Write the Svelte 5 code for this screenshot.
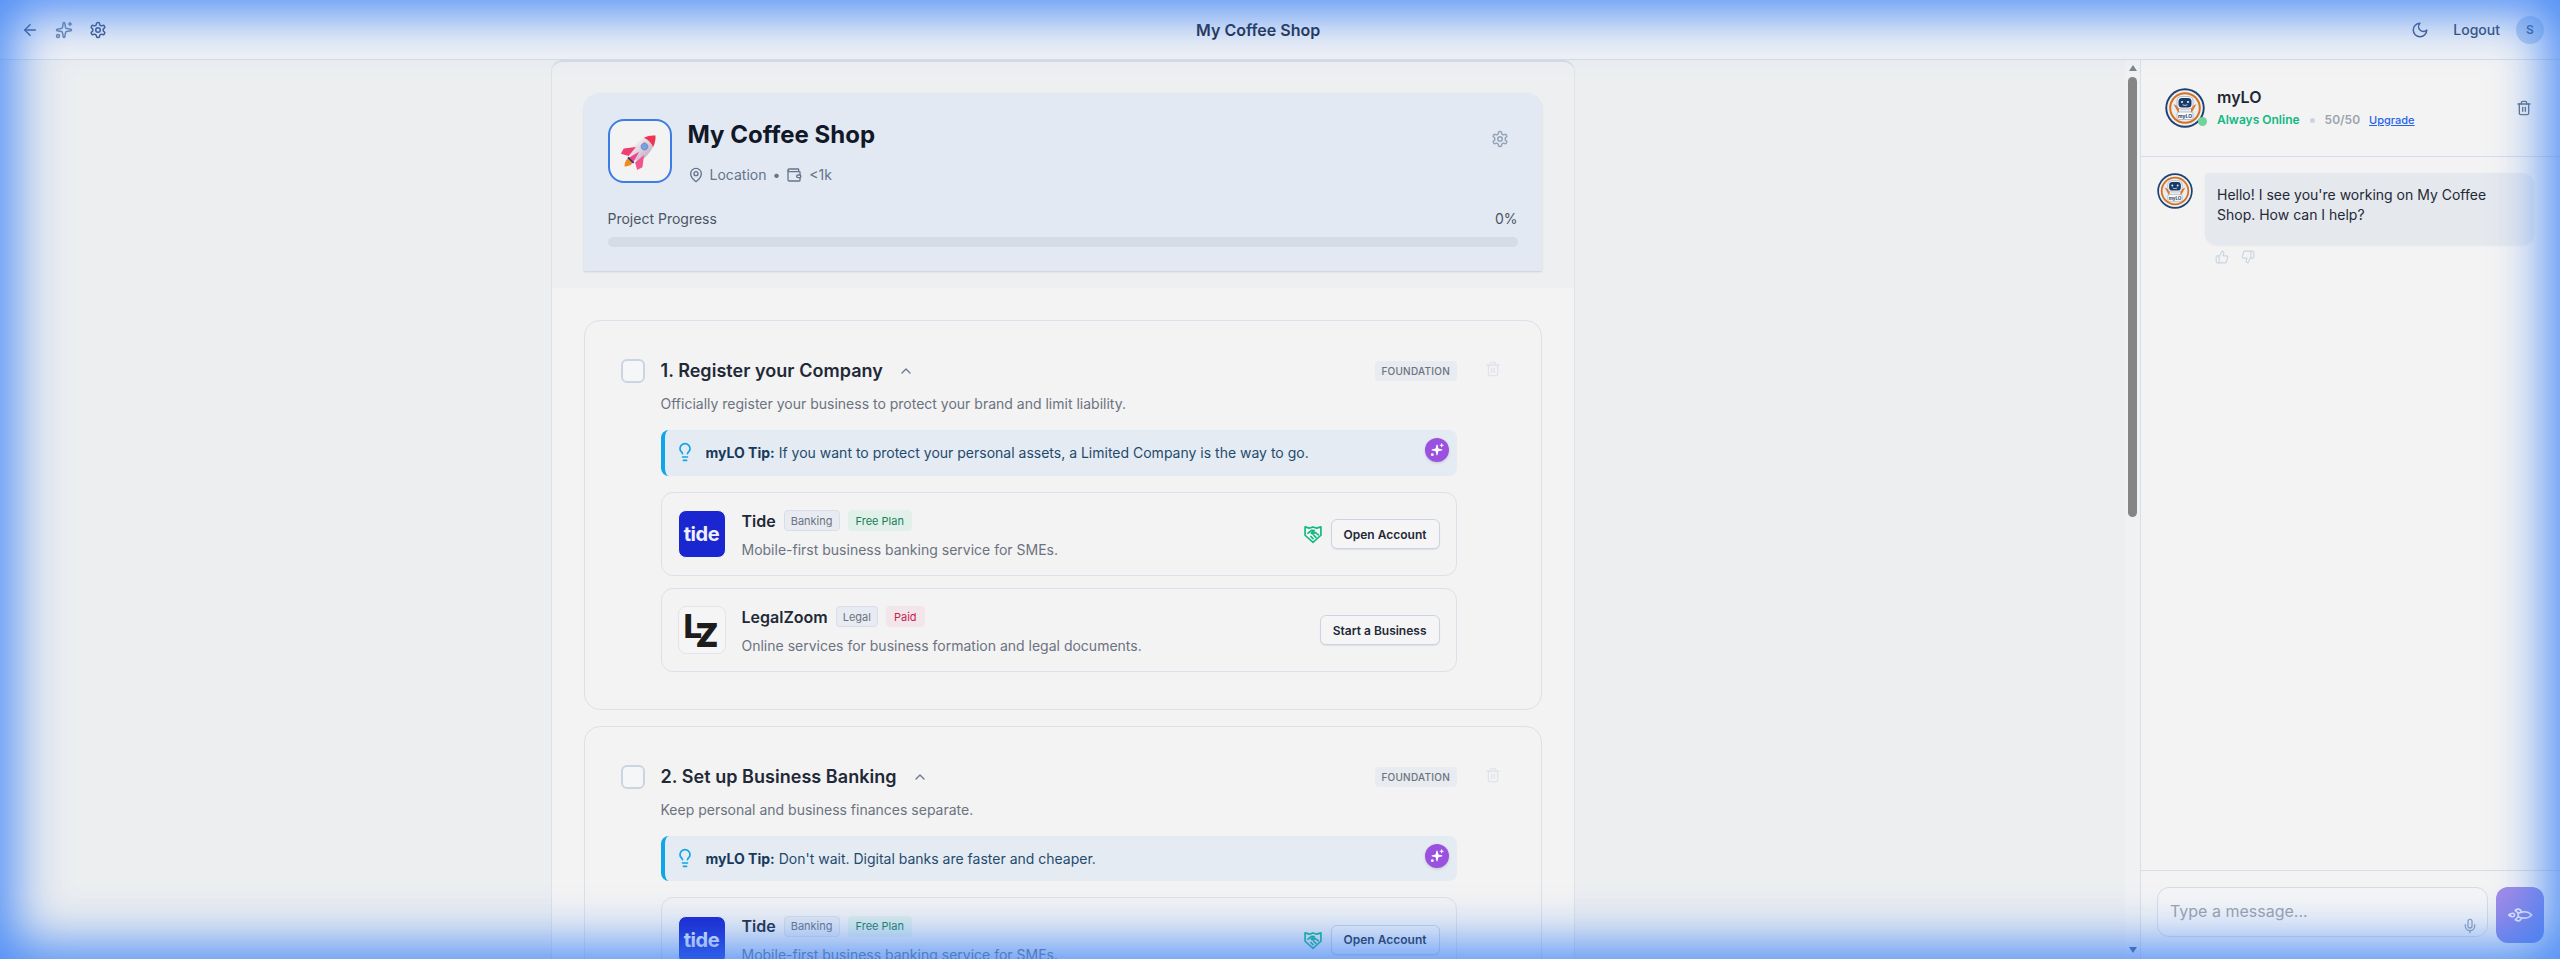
<script>
	const icons = {
		back: ['M12 19l-7-7 7-7', 'M19 12H5'],
		sparkles: [
			'M11.017 2.814a1 1 0 0 1 1.966 0l1.051 5.558a2 2 0 0 0 1.594 1.594l5.558 1.051a1 1 0 0 1 0 1.966l-5.558 1.051a2 2 0 0 0-1.594 1.594l-1.051 5.558a1 1 0 0 1-1.966 0l-1.051-5.558a2 2 0 0 0-1.594-1.594l-5.558-1.051a1 1 0 0 1 0-1.966l5.558-1.051a2 2 0 0 0 1.594-1.594z',
			'M20 2v4',
			'M22 4h-4',
			'M6 20a2 2 0 1 1-4 0 2 2 0 0 1 4 0'
		],
		gear: [
			'M12.22 2h-.44a2 2 0 0 0-2 2v.18a2 2 0 0 1-1 1.73l-.43.25a2 2 0 0 1-2 0l-.15-.08a2 2 0 0 0-2.73.73l-.22.38a2 2 0 0 0 .73 2.73l.15.1a2 2 0 0 1 1 1.72v.51a2 2 0 0 1-1 1.74l-.15.09a2 2 0 0 0-.73 2.73l.22.38a2 2 0 0 0 2.73.73l.15-.08a2 2 0 0 1 2 0l.43.25a2 2 0 0 1 1 1.73V20a2 2 0 0 0 2 2h.44a2 2 0 0 0 2-2v-.18a2 2 0 0 1 1-1.73l.43-.25a2 2 0 0 1 2 0l.15.08a2 2 0 0 0 2.73-.73l.22-.39a2 2 0 0 0-.73-2.73l-.15-.08a2 2 0 0 1-1-1.74v-.5a2 2 0 0 1 1-1.74l.15-.09a2 2 0 0 0 .73-2.73l-.22-.38a2 2 0 0 0-2.73-.73l-.15.08a2 2 0 0 1-2 0l-.43-.25a2 2 0 0 1-1-1.73V4a2 2 0 0 0-2-2z',
			'M15 12a3 3 0 1 1-6 0 3 3 0 0 1 6 0'
		],
		moon: ['M12 3a6 6 0 0 0 9 9 9 9 0 1 1-9-9Z'],
		pin: ['M20 10c0 6-8 12-8 12s-8-6-8-12a8 8 0 0 1 16 0Z', 'M15 10a3 3 0 1 1-6 0 3 3 0 0 1 6 0'],
		wallet: [
			'M19 7V4a1 1 0 0 0-1-1H5a2 2 0 0 0 0 4h15a1 1 0 0 1 1 1v4h-3a2 2 0 0 0 0 4h3a1 1 0 0 0 1-1v-2a1 1 0 0 0-1-1',
			'M3 5v14a2 2 0 0 0 2 2h15a1 1 0 0 0 1-1v-4'
		],
		chevron: ['m18 15-6-6-6 6'],
		bulb: [
			'M15 14c.2-1 .7-1.7 1.5-2.5 1-.9 1.500-2.200 1.500-3.500A6 6 0 0 0 6 8c0 1 .2 2.200 1.500 3.500.7.7 1.300 1.500 1.500 2.500',
			'M9 18h6',
			'M10 22h4'
		],
		trash: [
			'M3 6h18',
			'M19 6v14c0 1-1 2-2 2H7c-1 0-2-1-2-2V6',
			'M8 6V4c0-1 1-2 2-2h4c1 0 2 1 2 2v2',
			'M10 11v6',
			'M14 11v6'
		],
		up: [
			'M7 10v12',
			'M15 5.88 14 10h5.83a2 2 0 0 1 1.92 2.56l-2.33 8A2 2 0 0 1 17.5 22H4a2 2 0 0 1-2-2v-8a2 2 0 0 1 2-2h2.76a2 2 0 0 0 1.79-1.11L12 2a3.13 3.13 0 0 1 3 3.88Z'
		],
		down: [
			'M17 14V2',
			'M9 18.12 10 14H4.17a2 2 0 0 1-1.92-2.56l2.33-8A2 2 0 0 1 6.5 2H20a2 2 0 0 1 2 2v8a2 2 0 0 1-2 2h-2.76a2 2 0 0 0-1.79 1.11L12 22a3.13 3.13 0 0 1-3-3.88Z'
		],
		mic: [
			'M12 2a3 3 0 0 0-3 3v7a3 3 0 0 0 6 0V5a3 3 0 0 0-3-3Z',
			'M19 10v2a7 7 0 0 1-14 0v-2',
			'M12 19v3'
		],
		rocket: [
			'M4.5 16.5c-1.5 1.26-2 5-2 5s3.74-.5 5-2c.71-.84.7-2.13-.09-2.91a2.18 2.18 0 0 0-2.91-.09z',
			'm12 15-3-3a22 22 0 0 1 2-3.95A12.88 12.88 0 0 1 22 2c0 2.72-.78 7.5-6 11a22.35 22.35 0 0 1-4 2z',
			'M9 12H4s.55-3.03 2-4c1.62-1.08 5 0 5 0',
			'M12 15v5s3.03-.55 4-2c1.08-1.62 0-5 0-5'
		],
		partner: [
			'M2.500 3.500l5 1.500 4.500-1.500 4.500 1.500 5-1.500v10L12 22 2.500 13.500z',
			'M6 11l4.500-3.500 3 .5-3.500 3 2 1 2.500-2 4 3',
			'M9.500 15l2.500 2.500',
			'M13 13.500l2.500 2.500'
		]
	};

	const tide = {
		name: 'Tide',
		logo: 'tide',
		category: 'Banking',
		plan: 'Free Plan',
		planKind: 'free',
		desc: 'Mobile-first business banking service for SMEs.',
		action: 'Open Account',
		partner: true
	};
	const legalZoom = {
		name: 'LegalZoom',
		logo: 'lz',
		category: 'Legal',
		plan: 'Paid',
		planKind: 'paid',
		desc: 'Online services for business formation and legal documents.',
		action: 'Start a Business',
		partner: false
	};

	const steps = [
		{
			title: '1. Register your Company',
			desc: 'Officially register your business to protect your brand and limit liability.',
			tip: 'If you want to protect your personal assets, a Limited Company is the way to go.',
			providers: [tide, legalZoom]
		},
		{
			title: '2. Set up Business Banking',
			desc: 'Keep personal and business finances separate.',
			tip: "Don't wait. Digital banks are faster and cheaper.",
			providers: [tide]
		}
	];
</script>

{#snippet icon(name, size, cls = '')}
	<svg
		class={cls}
		width={size}
		height={size}
		viewBox="0 0 24 24"
		fill="none"
		stroke="currentColor"
		stroke-width="2"
		stroke-linecap="round"
		stroke-linejoin="round"
		aria-hidden="true"
	>
		{#each icons[name] as d}
			<path {d} />
		{/each}
	</svg>
{/snippet}

{#snippet robot(size)}
	<svg width={size} height={size} viewBox="0 0 40 40" aria-hidden="true">
		<circle cx="20" cy="20" r="19.700" fill="#1e4272" />
		<circle cx="20" cy="20" r="17.800" fill="#eef0f3" />
		<circle cx="20" cy="20" r="15.800" fill="#d6701f" />
		<circle cx="20" cy="20" r="13.800" fill="#e9ecf0" />
		<path d="M8.500 16l5.500 3v7zM31.500 16l-5.500 3v7z" fill="#e2731f" />
		<rect x="12" y="8.500" width="16" height="12.500" rx="4" fill="#f5f6f8" stroke="#8f9cae" stroke-width=".6" />
		<rect x="13.500" y="10" width="13" height="9.500" rx="3.500" fill="#183a68" />
		<circle cx="17" cy="14" r="1.100" fill="#e8eef6" />
		<circle cx="23" cy="14" r="1.100" fill="#e8eef6" />
		<path d="M17.500 16.800q2.500 1.200 5 0" stroke="#e8eef6" stroke-width=".8" fill="none" />
		<rect x="12" y="24" width="16" height="7.500" rx="2" fill="#fafbfc" stroke="#8f9cae" stroke-width=".6" />
		<text x="20" y="29.600" text-anchor="middle" font-size="5" font-weight="700" font-family="Inter, sans-serif" fill="#33415c">myLO</text>
	</svg>
{/snippet}

<div class="app">
	<header class="topbar">
		<div class="top-left">
			{@render icon('back', 18)}
			{@render icon('sparkles', 18, 'ico-spark')}
			{@render icon('gear', 18)}
		</div>
		<h1 class="top-title">My Coffee Shop</h1>
		<div class="top-right">
			{@render icon('moon', 18)}
			<span class="logout">Logout</span>
			<span class="user">S</span>
		</div>
	</header>

	<div class="body">
		<main class="scroller">
			<div class="column">
				<section class="hero-wrap">
					<div class="hero">
						<div class="hero-top">
							<div class="hero-icon">
								<svg width="46" height="46" viewBox="0 0 40 40" aria-hidden="true">
									<defs>
										<linearGradient id="rocket-body" x1="0" y1="0" x2="1" y2="0">
											<stop offset="0" stop-color="#f2e9ee" />
											<stop offset="1" stop-color="#c7b6cd" />
										</linearGradient>
									</defs>
									<g transform="rotate(45 20 20)">
										<path d="M17.500 31c-1.500 3 1 6.500 2.500 8 1.500-1.500 4-5 2.500-8z" fill="#f08a24" />
										<path d="M20 1c6.500 5.500 8.500 17 6 27H14c-2.500-10-.5-21.500 6-27z" fill="url(#rocket-body)" />
										<path d="M20 1c2.600 2.200 4.500 5.200 5.700 8.500-3.600-1.500-7.800-1.500-11.400 0C15.500 6.200 17.400 3.200 20 1z" fill="#ef3550" />
										<circle cx="20" cy="14.500" r="3.200" fill="#8f8aa6" />
										<circle cx="20" cy="14.500" r="2.300" fill="#63a9f5" />
										<path d="M15 20l-6.500 8.500 1.500 5 6-3.500z" fill="#ee3f6e" />
										<path d="M25 20l6.500 8.500-1.500 5-6-3.500z" fill="#f4548e" />
										<path d="M20 21l-3 10.500h6z" fill="#f0448a" />
										<path d="M16.500 30.500h7v1.500h-7z" fill="#2b3a75" />
									</g>
								</svg>
							</div>
							<div class="hero-text">
								<h2 class="hero-title">My Coffee Shop</h2>
								<div class="hero-meta">
									{@render icon('pin', 16)}
									<span class="loc">Location</span>
									<span class="bullet">•</span>
									{@render icon('wallet', 16)}
									<span class="budget">&lt;1k</span>
								</div>
							</div>
							{@render icon('gear', 18, 'hero-gear')}
						</div>
						<div class="progress-head">
							<span>Project Progress</span>
							<span>0%</span>
						</div>
						<div class="progress-track"></div>
					</div>
				</section>

				<div class="steps">
					{#each steps as step}
						<article class="step">
							<span class="checkbox"></span>
							<div class="step-main">
								<div class="step-head">
									<h3 class="step-title">{step.title}</h3>
									{@render icon('chevron', 16, 'step-chevron')}
									<span class="phase">FOUNDATION</span>
								</div>
								<p class="step-desc">{step.desc}</p>
								<div class="tip">
									{@render icon('bulb', 20, 'tip-bulb')}
									<p class="tip-text"><b>myLO Tip:</b> {step.tip}</p>
									<span class="tip-btn">
										<svg width="14" height="14" viewBox="0 0 24 24" fill="#fff" aria-hidden="true">
											<path d="M11 3.500c.3-1.300 1.700-1.300 2 0l1 4.700c.2.800.8 1.400 1.600 1.600l4.700 1c1.300.3 1.300 1.700 0 2l-4.700 1c-.8.200-1.400.8-1.600 1.600l-1 4.700c-.3 1.300-1.700 1.300-2 0l-1-4.700c-.2-.8-.8-1.400-1.600-1.600l-4.700-1c-1.300-.3-1.300-1.700 0-2l4.700-1c.8-.2 1.400-.8 1.600-1.600z" />
											<circle cx="4" cy="20" r="2.400" />
											<path d="M20 1.500v5M17.500 4h5" stroke="#fff" stroke-width="1.800" stroke-linecap="round" />
										</svg>
									</span>
								</div>
								<div class="providers">
									{#each step.providers as p}
										<div class="provider">
											{#if p.logo === 'tide'}
												<span class="logo logo-tide">tide</span>
											{:else}
												<span class="logo logo-lz">
													<svg width="46" height="46" viewBox="0 0 46 46" aria-hidden="true">
														<text x="4.500" y="30.700" font-size="33" font-weight="800" font-family="Inter, sans-serif" fill="#1c1c1c">L</text>
														<text x="16.500" y="39.700" font-size="33" font-weight="900" font-family="Inter, sans-serif" fill="#1c1c1c">Z</text>
													</svg>
												</span>
											{/if}
											<div class="provider-text">
												<div class="provider-head">
													<span class="provider-name">{p.name}</span>
													<span class="tag">{p.category}</span>
													<span class="plan {p.planKind}">{p.plan}</span>
												</div>
												<p class="provider-desc">{p.desc}</p>
											</div>
											{#if p.partner}
												{@render icon('partner', 20, 'partner')}
											{/if}
											<button class="action">{p.action}</button>
										</div>
									{/each}
								</div>
							</div>
							{@render icon('trash', 16, 'step-trash')}
						</article>
					{/each}
				</div>
			</div>
		</main>

		<div class="scrollbar" aria-hidden="true">
			<span class="arrow arrow-up"></span>
			<span class="thumb"></span>
			<span class="arrow arrow-down"></span>
		</div>

		<aside class="chat">
			<div class="chat-head">
				<div class="chat-avatar">
					{@render robot(40)}
					<span class="online"></span>
				</div>
				<div class="chat-id">
					<div class="chat-name">myLO</div>
					<div class="chat-status">
						<span class="always">Always Online</span>
						<span class="sep"></span>
						<span class="quota">50/50</span>
						<span class="upgrade">Upgrade</span>
					</div>
				</div>
				{@render icon('trash', 16, 'chat-trash')}
			</div>

			<div class="messages">
				<div class="message">
					{@render robot(36)}
					<div class="message-col">
						<p class="bubble">Hello! I see you're working on My Coffee Shop. How can I help?</p>
						<div class="feedback">
							{@render icon('up', 14)}
							{@render icon('down', 14)}
						</div>
					</div>
				</div>
			</div>

			<div class="composer">
				<div class="input">
					<span class="placeholder">Type a message...</span>
					{@render icon('mic', 16, 'mic')}
				</div>
				<span class="send">{@render icon('rocket', 20, 'send-icon')}</span>
			</div>
		</aside>
	</div>

	<div class="glow" aria-hidden="true"></div>
</div>

<style>
	:global(body) {
		margin: 0;
		background: #eceef0;
		overflow: hidden;
	}
	.app {
		height: 959px;
		display: flex;
		flex-direction: column;
		font-family: Inter, 'Liberation Sans', sans-serif;
		color: #1f2937;
		overflow: hidden;
	}
	h1,
	h2,
	h3,
	p {
		margin: 0;
	}
	svg {
		display: block;
		flex: none;
	}

	/* top bar */
	.topbar {
		height: 60px;
		box-sizing: border-box;
		flex: none;
		display: flex;
		align-items: center;
		justify-content: space-between;
		padding: 0 16px 0 21px;
		background: #f2f3f5;
		border-bottom: 1px solid #d6dce6;
	}
	.top-left {
		display: flex;
		align-items: center;
		gap: 16px;
		color: #3f5680;
	}
	:global(.ico-spark) {
		color: #7286a8;
	}
	.top-title {
		font-size: 16px;
		font-weight: 600;
		color: #1e293b;
		margin-left: -2px;
	}
	.top-right {
		display: flex;
		align-items: center;
		color: #475e85;
	}
	.logout {
		margin-left: 24px;
		margin-right: 16px;
		font-size: 14px;
		font-weight: 500;
		color: #334a6b;
	}
	.user {
		width: 28px;
		height: 28px;
		border-radius: 50%;
		background: #bdd0ea;
		color: #3b5a8a;
		font-size: 12px;
		font-weight: 600;
		display: flex;
		align-items: center;
		justify-content: center;
	}

	.body {
		flex: 1;
		min-height: 0;
		display: flex;
	}

	/* center column */
	.scroller {
		flex: 1;
		min-width: 0;
		overflow: hidden;
		display: flex;
		justify-content: center;
		background: #eceef0;
	}
	.column {
		width: 1024px;
		box-sizing: border-box;
		flex: none;
		align-self: flex-start;
		background: #f3f3f3;
		border: 1px solid #dde1e9;
		border-top: 2px solid #d4dce7;
		border-bottom: 0;
		border-radius: 12px 12px 0 0;
		overflow: hidden;
	}
	.hero-wrap {
		padding: 31px 32px 17px;
		background: #eeeff1;
	}
	.hero {
		height: 178px;
		box-sizing: border-box;
		padding: 26px 24px 24px;
		background: #e2e9f3;
		border-radius: 16px 16px 0 0;
		box-shadow: 0 1px 2px rgba(100, 116, 139, 0.25);
	}
	.hero-top {
		display: flex;
		gap: 16px;
		height: 64px;
	}
	.hero-icon {
		width: 64px;
		height: 64px;
		box-sizing: border-box;
		border: 2px solid #3b7de8;
		border-radius: 16px;
		background: #f3f3f3;
		display: flex;
		align-items: center;
		justify-content: center;
		flex: none;
	}
	.hero-text {
		flex: 1;
		min-width: 0;
	}
	.hero-title {
		font-size: 24px;
		line-height: 32px;
		font-weight: 700;
		color: #111827;
	}
	.hero-meta {
		margin-top: 14px;
		display: flex;
		align-items: center;
		font-size: 14px;
		line-height: 20px;
		color: #64748b;
	}
	.loc {
		margin-left: 6px;
	}
	.bullet {
		margin: 0 6px;
		color: #64748b;
	}
	.budget {
		margin-left: 7px;
	}
	:global(.hero-gear) {
		color: #94a3b8;
		margin-top: 11px;
		margin-right: 9px;
	}
	.progress-head {
		margin-top: 26px;
		display: flex;
		justify-content: space-between;
		font-size: 14px;
		line-height: 20px;
		font-weight: 400;
		color: #4b5563;
	}
	.progress-track {
		margin-top: 8px;
		height: 10px;
		border-radius: 5px;
		background: #d5dce5;
	}

	/* steps */
	.steps {
		padding: 32px;
		display: flex;
		flex-direction: column;
		gap: 16px;
	}
	.step {
		display: grid;
		grid-template-columns: 24px minmax(0, 1fr) 24px;
		column-gap: 16px;
		padding: 36px 36px 37px;
		background: #f3f3f3;
		border: 1px solid #dde0ea;
		border-radius: 16px;
	}
	.checkbox {
		width: 24px;
		height: 24px;
		margin-top: 2px;
		box-sizing: border-box;
		border: 2px solid #cbd5e1;
		border-radius: 6px;
		background: #f5f6f7;
	}
	.step-main {
		margin-right: 8px;
	}
	.step-head {
		height: 28px;
		display: flex;
		align-items: center;
	}
	.step-title {
		font-size: 18px;
		line-height: 28px;
		font-weight: 600;
		color: #1f2937;
		letter-spacing: 0.04px;
	}
	:global(.step-chevron) {
		color: #6b7a90;
		margin-left: 15px;
	}
	.phase {
		margin-left: auto;
		height: 20px;
		padding: 0 6.5px;
		display: flex;
		align-items: center;
		border-radius: 4px;
		background: #e8ebef;
		color: #6b7280;
		font-size: 10px;
		letter-spacing: 0.25px;
		font-weight: 500;
	}
	:global(.step-trash) {
		color: #e0e4ea;
		margin: 4px 0 0 4px;
	}
	.step-desc {
		margin-top: 9px;
		font-size: 14px;
		line-height: 20px;
		color: #6b7280;
	}
	.tip {
		position: relative;
		margin-top: 16px;
		display: flex;
		align-items: center;
		gap: 11px;
		padding: 12.25px 12px 12.25px 10px;
		background: #e5ebf2;
		border-left: 4px solid #0ea5e9;
		border-radius: 8px;
	}
	:global(.tip-bulb) {
		color: #0ea5e9;
		margin: -2px 0 -1px;
	}
	.tip-text {
		font-size: 14px;
		line-height: 21px;
		color: #1f4a6e;
	}
	.tip-text b {
		font-weight: 700;
		color: #17395c;
	}
	.tip-btn {
		position: absolute;
		top: 8px;
		right: 8px;
		width: 24px;
		height: 24px;
		border-radius: 50%;
		background: #9b51e0;
		box-shadow: 0 1px 3px rgba(0, 0, 0, 0.15);
		display: flex;
		align-items: center;
		justify-content: center;
	}
	.providers {
		margin-top: 16px;
		display: flex;
		flex-direction: column;
		gap: 12px;
	}
	.provider {
		display: flex;
		align-items: center;
		padding: 16px 16px 15px;
		border: 1px solid #dde0ea;
		border-radius: 12px;
	}
	.logo {
		width: 48px;
		height: 48px;
		box-sizing: border-box;
		flex: none;
		border-radius: 8px;
		display: flex;
		align-items: center;
		justify-content: center;
	}
	.logo-tide {
		background: #1a26cf;
		color: #eef0fb;
		border: 1px solid #f3f3f3;
		font-size: 20px;
		font-weight: 700;
		letter-spacing: -0.4px;
	}
	.logo-lz {
		background: #f5f5f5;
		border: 1px solid #e2e4ea;
	}
	.provider-text {
		flex: 1;
		min-width: 0;
		margin-left: 16px;
	}
	.provider-head {
		height: 24px;
		display: flex;
		align-items: center;
		gap: 8px;
	}
	.provider-name {
		font-size: 16px;
		font-weight: 600;
		color: #1f2937;
	}
	.tag,
	.plan {
		height: 21px;
		box-sizing: border-box;
		display: flex;
		align-items: center;
		border-radius: 4px;
		font-size: 11px;
	}
	.tag {
		padding: 0 6px;
		background: #e8ecf2;
		border: 1px solid #d8dee8;
		color: #6b7280;
	}
	.plan {
		padding: 0 8px;
	}
	.plan.free {
		background: #e1f0e9;
		color: #15805a;
	}
	.plan.paid {
		background: #f3e6ea;
		color: #c81e50;
	}
	.provider-desc {
		margin-top: 7px;
		font-size: 14px;
		line-height: 20px;
		color: #6b7280;
	}
	:global(.partner) {
		color: #10b981;
		margin-right: 8px;
	}
	.action {
		height: 30px;
		padding: 0 12px;
		box-sizing: border-box;
		font: 600 12px Inter, sans-serif;
		color: #1f2937;
		background: #f5f5f6;
		border: 1px solid #cbd5e1;
		border-radius: 6px;
		box-shadow: 0 1px 1px rgba(100, 116, 139, 0.15);
	}

	/* scrollbar */
	.scrollbar {
		width: 15px;
		flex: none;
		display: flex;
		flex-direction: column;
		align-items: center;
		background: #f0f1f2;
	}
	.arrow {
		width: 0;
		height: 0;
		border-left: 4.5px solid transparent;
		border-right: 4.5px solid transparent;
	}
	.arrow-up {
		margin-top: 5px;
		border-bottom: 6px solid #7d8590;
	}
	.thumb {
		margin-top: 6px;
		width: 9px;
		height: 440px;
		border-radius: 5px;
		background: #858585;
	}
	.arrow-down {
		margin-top: auto;
		margin-bottom: 6px;
		border-top: 6px solid #3f5f94;
	}

	/* chat */
	.chat {
		width: 420px;
		box-sizing: border-box;
		flex: none;
		display: flex;
		flex-direction: column;
		background: #f3f3f3;
		border-left: 1px solid #d9dfe9;
	}
	.chat-head {
		height: 97px;
		box-sizing: border-box;
		flex: none;
		display: flex;
		align-items: center;
		padding: 0 28px 0 24px;
		border-bottom: 1px solid #d6dce8;
	}
	.chat-avatar {
		position: relative;
		flex: none;
	}
	.online {
		position: absolute;
		right: -2px;
		bottom: 2px;
		width: 9px;
		height: 9px;
		border-radius: 50%;
		background: #6fd39b;
	}
	.chat-id {
		flex: 1;
		margin-left: 12px;
		margin-top: -3px;
	}
	.chat-name {
		font-size: 16px;
		line-height: 24px;
		font-weight: 600;
		color: #1f2937;
	}
	.chat-status {
		margin-top: 2px;
		display: flex;
		align-items: center;
		font-size: 12px;
		line-height: 18px;
		font-weight: 600;
	}
	.always {
		color: #10b981;
	}
	.sep {
		width: 5px;
		height: 5px;
		margin: 2px 10px 0;
		border-radius: 50%;
		background: #cbd5e1;
	}
	.quota {
		color: #9ca3af;
	}
	.upgrade {
		margin-left: 9px;
		font-size: 11px;
		font-weight: 500;
		color: #2563eb;
		text-decoration: underline;
	}
	:global(.chat-trash) {
		color: #64748b;
	}
	.messages {
		flex: 1;
		min-height: 0;
		padding: 16px 26px 16px 16px;
	}
	.message {
		display: flex;
		gap: 12px;
	}
	.message-col {
		flex: 1;
		min-width: 0;
	}
	.bubble {
		height: 72px;
		box-sizing: border-box;
		padding: 12px;
		font-size: 14px;
		line-height: 20px;
		color: #1f2937;
		background: #e5e8ed;
		border-radius: 4px 12px 12px 12px;
		box-shadow: 0 1px 2px rgba(100, 116, 139, 0.08);
	}
	.feedback {
		margin: 5px 0 0 10px;
		display: flex;
		gap: 12px;
		color: #cbd5e1;
	}
	.composer {
		height: 89px;
		box-sizing: border-box;
		flex: none;
		display: flex;
		align-items: flex-start;
		gap: 8px;
		padding: 16px 16px 0;
		border-top: 1px solid #d6dce8;
	}
	.input {
		position: relative;
		flex: 1;
		height: 50px;
		box-sizing: border-box;
		padding: 11px 12px;
		border: 1px solid #d5dce8;
		border-radius: 12px;
		background: #f5f5f6;
	}
	.placeholder {
		font-size: 16px;
		line-height: 24px;
		color: #9ca3af;
	}
	:global(.mic) {
		position: absolute;
		right: 9px;
		bottom: 2px;
		color: #94a3b8;
	}
	.send {
		width: 48px;
		height: 56px;
		flex: none;
		border-radius: 12px;
		background: linear-gradient(135deg, #a78be6, #6d84ea);
		color: #f3f0fb;
		display: flex;
		align-items: center;
		justify-content: center;
	}
	:global(.send-icon) {
		transform: rotate(45deg);
	}

	/* blue glow round the viewport */
	.glow {
		position: fixed;
		inset: 0;
		pointer-events: none;
		box-shadow: inset 0 0 50px 14px rgba(59, 130, 246, 0.9);
	}
</style>
